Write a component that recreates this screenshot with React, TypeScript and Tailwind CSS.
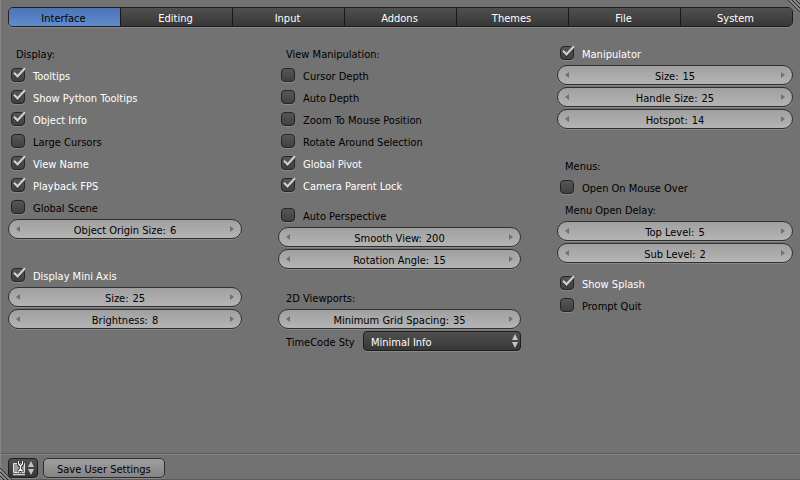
import { useId, useState } from "react";

const raised = "shadow-[0_1px_0_rgba(255,255,255,0.16)]";

function Tick() {
  return (
    <svg
      viewBox="0 0 16 16"
      className="pointer-events-none absolute -top-px left-0 hidden size-4 peer-checked:block"
      aria-hidden="true"
    >
      <path d="M3 7 L6.500 10.500 L14 2" fill="none" stroke="#2b2b2b" strokeWidth="3" opacity="0.6" />
      <path d="M3 5.800 L6.500 9.300 L14 1.200" fill="none" stroke="#cfcfcf" strokeWidth="2.200" />
    </svg>
  );
}

function Check({ label, on = false }: { label: string; on?: boolean }) {
  const [checked, setChecked] = useState(on);
  return (
    <label className="flex h-5 items-center gap-2 pl-[3px]">
      <span className="relative size-3.5 shrink-0">
        <input
          type="checkbox"
          checked={checked}
          onChange={(e) => setChecked(e.target.checked)}
          className={`peer block size-3.5 appearance-none rounded-[4px] border border-[#242424] bg-linear-to-b from-[#565656] to-[#414141] ${raised}`}
        />
        <Tick />
      </span>
      <span className={`pt-1 ${checked ? "text-white" : "text-black"}`}>{label}</span>
    </label>
  );
}

function Arrow({ left = false }: { left?: boolean }) {
  return (
    <svg viewBox="0 0 4 6" className="h-1.5 w-1" aria-hidden="true">
      <path d={left ? "M4 0 V6 L0 3 Z" : "M0 0 V6 L4 3 Z"} fill="#707070" />
    </svg>
  );
}

function NumberField({ label, value }: { label: string; value: number }) {
  const id = useId();
  const [current, setCurrent] = useState(String(value));
  const step = (by: number) => setCurrent(String((Number(current) || 0) + by));
  return (
    <div
      className={`flex h-5 items-center justify-between rounded-full border border-[#303030] bg-linear-to-b from-[#a0a0a0] to-[#b4b4b4] px-[7px] ${raised}`}
    >
      <button type="button" aria-label={`Decrease ${label}`} onClick={() => step(-1)}>
        <Arrow left />
      </button>
      <span className="flex items-center gap-1 pt-1">
        <label htmlFor={id}>{label}:</label>
        <input
          id={id}
          type="text"
          inputMode="numeric"
          value={current}
          onChange={(e) => setCurrent(e.target.value)}
          style={{ width: `${Math.max(1, current.length)}ch` }}
          className="h-4 bg-transparent outline-none"
        />
      </span>
      <button type="button" aria-label={`Increase ${label}`} onClick={() => step(1)}>
        <Arrow />
      </button>
    </div>
  );
}

function Heading({ children }: { children: string }) {
  return <h2 className="h-5 pt-1 pl-2">{children}</h2>;
}

function UpDown() {
  return (
    <svg viewBox="0 0 6 14" className="pointer-events-none h-3.5 w-1.5" aria-hidden="true">
      <path d="M3 0 L6 6 H0 Z M3 14 L6 8 H0 Z" fill="#c4c4c4" />
    </svg>
  );
}

function Grip({ className }: { className: string }) {
  return (
    <svg viewBox="0 0 12 12" className={`pointer-events-none absolute size-3 ${className}`} aria-hidden="true">
      <path d="M0 0 L12 12 M4 0 L12 8 M8 0 L12 4" stroke="#2c2c2c" strokeWidth="1" />
      <path d="M1.5 0 L12 10.5 M5.5 0 L12 6.5 M9.5 0 L12 2.5" stroke="#a6a6a6" strokeWidth="1" />
    </svg>
  );
}

const tabs = ["Interface", "Editing", "Input", "Addons", "Themes", "File", "System"];

export default function App() {
  const [tab, setTab] = useState("Interface");
  return (
    <div className="relative flex min-h-screen flex-col border-b border-l border-b-[#5c5c5c] border-l-[#858585] bg-[#727272] font-['DejaVu_Sans_Condensed','DejaVu_Sans',sans-serif] text-[11px] leading-4 text-black">
      <nav className={`mx-[7px] mt-[7px] flex h-5 overflow-hidden rounded-[5px] border border-[#1e1e1e] ${raised}`}>
        {tabs.map((name) => (
          <button
            key={name}
            type="button"
            aria-pressed={tab === name}
            onClick={() => setTab(name)}
            className={`flex-1 border-r border-[#191919] pt-[3px] pr-0.5 last:border-r-0 ${
              tab === name
                ? "bg-linear-to-b from-[#4a74b6] to-[#628cce] text-black"
                : "bg-linear-to-b from-[#505050] to-[#373737] text-white"
            }`}
          >
            {name}
          </button>
        ))}
      </nav>

      <main className="mx-[7px] mt-4 grid flex-1 grid-cols-[234fr_243fr_236fr] items-start gap-9">
        <section className="flex flex-col gap-[26px]">
          <div className="flex flex-col gap-0.5">
            <Heading>Display:</Heading>
            <Check label="Tooltips" on />
            <Check label="Show Python Tooltips" on />
            <Check label="Object Info" on />
            <Check label="Large Cursors" />
            <Check label="View Name" on />
            <Check label="Playback FPS" on />
            <Check label="Global Scene" />
            <NumberField label="Object Origin Size" value={6} />
          </div>
          <div className="flex flex-col gap-0.5">
            <Check label="Display Mini Axis" on />
            <NumberField label="Size" value={25} />
            <NumberField label="Brightness" value={8} />
          </div>
        </section>

        <section className="flex flex-col">
          <div className="flex flex-col gap-0.5">
            <Heading>View Manipulation:</Heading>
            <Check label="Cursor Depth" />
            <Check label="Auto Depth" />
            <Check label="Zoom To Mouse Position" />
            <Check label="Rotate Around Selection" />
            <Check label="Global Pivot" on />
            <Check label="Camera Parent Lock" on />
          </div>
          <div className="mt-2.5 flex flex-col gap-0.5">
            <Check label="Auto Perspective" />
            <NumberField label="Smooth View" value={200} />
            <NumberField label="Rotation Angle" value={15} />
          </div>
          <div className="mt-[18px] flex flex-col gap-0.5">
            <Heading>2D Viewports:</Heading>
            <NumberField label="Minimum Grid Spacing" value={35} />
            <div className="flex h-5">
              <label htmlFor="timecode" className="w-[85px] shrink-0 pt-1 pl-2">
                TimeCode Sty
              </label>
              <div className="relative flex-1">
                <select
                  id="timecode"
                  className={`h-5 w-full appearance-none rounded-[4px] border border-[#1e1e1e] bg-linear-to-b from-[#505050] to-[#373737] pt-[3px] pl-[7px] text-white ${raised}`}
                >
                  <option>Minimal Info</option>
                </select>
                <span className="pointer-events-none absolute top-[3px] right-[3px]">
                  <UpDown />
                </span>
              </div>
            </div>
          </div>
        </section>

        <section className="flex flex-col">
          <div className="flex flex-col gap-0.5">
            <Check label="Manipulator" on />
            <NumberField label="Size" value={15} />
            <NumberField label="Handle Size" value={25} />
            <NumberField label="Hotspot" value={14} />
          </div>
          <div className="mt-[26px] flex flex-col gap-0.5">
            <Heading>Menus:</Heading>
            <Check label="Open On Mouse Over" />
            <Heading>Menu Open Delay:</Heading>
            <NumberField label="Top Level" value={5} />
            <NumberField label="Sub Level" value={2} />
          </div>
          <div className="mt-2.5 flex flex-col gap-0.5">
            <Check label="Show Splash" on />
            <Check label="Prompt Quit" />
          </div>
        </section>
      </main>

      <footer className="flex h-[26px] items-start gap-[5px] border-t border-[#5a5a5a] pt-1 pl-[7px] shadow-[inset_0_1px_0_#858585]">
        <button
          type="button"
          aria-label="Editor type"
          className={`flex h-5 w-[30px] items-center justify-between rounded-[4px] border border-[#1e1e1e] bg-linear-to-b from-[#505050] to-[#373737] px-[3px] ${raised}`}
        >
          <svg viewBox="0 0 14 15" className="h-[15px] w-3.5" aria-hidden="true">
            <path d="M1.500 2.500 H12.500 V11.500 H1.500 Z" fill="#9a9a9a" stroke="#dedede" />
            <path d="M1 13.500 H13" stroke="#d0d0d0" strokeWidth="1.500" />
            <path d="M6.500 0 V3 L8.500 5.500 L10.500 3 V0 M8.500 5 V8 M6.500 11 L8.500 8 L10.500 11" fill="none" stroke="#151515" strokeWidth="3" />
            <path d="M6.500 0 V3 L8.500 5 L10.500 3 V0 M8.500 5 V8 M6.500 10.500 L8.500 8 L10.500 10.500" fill="none" stroke="#ffffff" strokeWidth="1.300" />
          </svg>
          <UpDown />
        </button>
        <button
          type="button"
          className={`h-5 rounded-[5px] border border-[#303030] bg-linear-to-b from-[#a0a0a0] to-[#848484] px-[13px] pt-[3px] ${raised}`}
        >
          Save User Settings
        </button>
      </footer>
      <Grip className="top-0 right-0" />
      <Grip className="-bottom-px -left-px rotate-180" />
    </div>
  );
}
